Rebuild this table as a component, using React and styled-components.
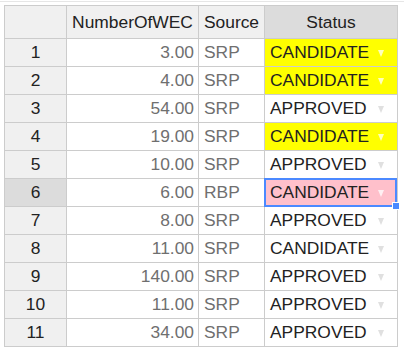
import styled, { createGlobalStyle } from 'styled-components'

const rows = [
  { wec: '3.00', source: 'SRP', status: 'CANDIDATE', tone: 'yellow' },
  { wec: '4.00', source: 'SRP', status: 'CANDIDATE', tone: 'yellow' },
  { wec: '54.00', source: 'SRP', status: 'APPROVED' },
  { wec: '19.00', source: 'SRP', status: 'CANDIDATE', tone: 'yellow' },
  { wec: '10.00', source: 'SRP', status: 'APPROVED' },
  { wec: '6.00', source: 'RBP', status: 'CANDIDATE', tone: 'pink', selected: true },
  { wec: '8.00', source: 'SRP', status: 'APPROVED' },
  { wec: '11.00', source: 'SRP', status: 'CANDIDATE' },
  { wec: '140.00', source: 'SRP', status: 'APPROVED' },
  { wec: '11.00', source: 'SRP', status: 'APPROVED' },
  { wec: '34.00', source: 'SRP', status: 'APPROVED' },
]

const tones = { yellow: '#ffff00', pink: '#ffc0cb' }

const GlobalStyle = createGlobalStyle`
  body {
    margin: 0;
    background: #fff;
    font-family: "Liberation Sans", Arial, sans-serif;
  }
`

const Page = styled.div`
  padding: 0 0 0 4px;
`

const TopEdge = styled.div`
  height: 1px;
  margin: 0 0 3px -4px;
  border-bottom: 1px solid #e6e6e6;
`

const Grid = styled.table`
  border-collapse: separate;
  border-spacing: 0;
  table-layout: fixed;
  border-top: 1px solid #ccc;
  border-left: 1px solid #ccc;
  font-size: 17.4px;
  color: #222;
`

const HeadCell = styled.th`
  box-sizing: border-box;
  height: 33px;
  padding: 0 4px;
  font-weight: normal;
  text-align: center;
  white-space: nowrap;
  background: ${p => (p.$active ? '#dcdcdc' : '#f0f0f0')};
  border-right: 1px solid #ccc;
  border-bottom: 1px solid #ccc;
`

const RowHead = styled(HeadCell)`
  height: 28px;
`

const Cell = styled.td`
  box-sizing: border-box;
  position: relative;
  z-index: ${p => (p.$selected ? 2 : 'auto')};
  height: 28px;
  padding: 0 4px 0 5px;
  white-space: nowrap;
  text-align: ${p => (p.$numeric ? 'right' : 'left')};
  color: ${p => (p.$dim ? '#6f6f6f' : '#222')};
  background: ${p => tones[p.$tone] || '#fff'};
  border-right: 1px solid #ccc;
  border-bottom: 1px solid #ccc;
`

const StatusValue = styled.div`
  display: flex;
  align-items: center;
`

const Arrow = styled.span`
  margin: 2px 9px 0 auto;
  width: 0;
  height: 0;
  border-left: 3.5px solid transparent;
  border-right: 3.5px solid transparent;
  border-top: 7px solid ${p => (p.$onColor ? 'rgba(255,255,255,0.75)' : '#e0e0e0')};
`

const Selection = styled.div`
  position: absolute;
  inset: -1px 0 -1px -1px;
  border: 2px solid #4b89ff;
  pointer-events: none;
`

const Handle = styled.div`
  position: absolute;
  right: -5px;
  bottom: -5px;
  width: 6px;
  height: 6px;
  background: #4b89ff;
  border: 1px solid #fff;
`

export default function App() {
  return (
    <Page>
      <GlobalStyle />
      <TopEdge />
      <Grid>
        <colgroup>
          <col style={{ width: 62 }} />
          <col style={{ width: 132 }} />
          <col style={{ width: 66 }} />
          <col style={{ width: 133 }} />
        </colgroup>
        <thead>
          <tr>
            <HeadCell />
            <HeadCell>NumberOfWEC</HeadCell>
            <HeadCell>Source</HeadCell>
            <HeadCell $active>Status</HeadCell>
          </tr>
        </thead>
        <tbody>
          {rows.map((row, index) => (
            <tr key={index}>
              <RowHead $active={row.selected}>{index + 1}</RowHead>
              <Cell $numeric $dim>{row.wec}</Cell>
              <Cell $dim>{row.source}</Cell>
              <Cell $tone={row.tone} $selected={row.selected}>
                <StatusValue>
                  {row.status}
                  <Arrow $onColor={!!row.tone} />
                </StatusValue>
                {row.selected && (
                  <Selection>
                    <Handle />
                  </Selection>
                )}
              </Cell>
            </tr>
          ))}
        </tbody>
      </Grid>
    </Page>
  )
}
